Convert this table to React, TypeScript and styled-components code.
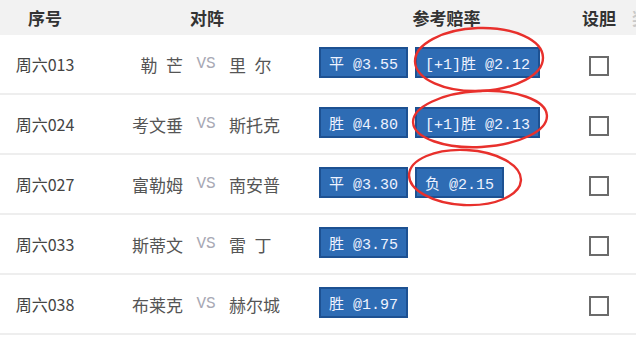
import React from 'react'
import styled, { createGlobalStyle } from 'styled-components';

type Match = {
  no: string;
  home: string;
  away: string;
  odds: string[];
};

const matches: Match[] = [
  { no: '周六013', home: '勒 芒', away: '里 尔', odds: ['平 @3.55', '[+1]胜 @2.12'] },
  { no: '周六024', home: '考文垂', away: '斯托克', odds: ['胜 @4.80', '[+1]胜 @2.13'] },
  { no: '周六027', home: '富勒姆', away: '南安普', odds: ['平 @3.30', '负 @2.15'] },
  { no: '周六033', home: '斯蒂文', away: '雷 丁', odds: ['胜 @3.75'] },
  { no: '周六038', home: '布莱克', away: '赫尔城', odds: ['胜 @1.97'] },
];

// annotation rings drawn over the odds column
const rings = [
  { cx: 479, cy: 59.5, rx: 64, ry: 31.5, rot: -2 },
  { cx: 480, cy: 119, rx: 67, ry: 28, rot: -3 },
  { cx: 465, cy: 177.5, rx: 56, ry: 27.5, rot: 3 },
];

// two-char names are padded with a wider gap
const padName = (name: string) => name.replace(' ', '\u2002');

const App: React.FC = () => {
  return (
    <PAGE>
      <GlobalStyle />
      <TABLE>
        <HEADROW>
          <HeadCell>序号</HeadCell>
          <HeadCell $padLeft={10}>对阵</HeadCell>
          <HeadCell $padLeft={13}>参考赔率</HeadCell>
          <HeadCell>设胆</HeadCell>
          <HeadCell $faded>奖金</HeadCell>
        </HEADROW>
        {matches.map((m, index) => (
          <ROW key={index}>
            <NoCell>{m.no}</NoCell>
            <TeamCell>
              <Team $side='home'>{padName(m.home)}</Team>
              <Versus>VS</Versus>
              <Team $side='away'>{padName(m.away)}</Team>
            </TeamCell>
            <OddsCell>
              {m.odds.map((o, i) => (
                <OddButton key={i}>{o}</OddButton>
              ))}
            </OddsCell>
            <CheckCell>
              <CheckBox />
            </CheckCell>
            <div />
          </ROW>
        ))}
      </TABLE>
      <Rings viewBox='0 0 636 353' width={636} height={353}>
        {rings.map((r, i) => (
          <ellipse
            key={i}
            cx={r.cx}
            cy={r.cy}
            rx={r.rx}
            ry={r.ry}
            transform={`rotate(${r.rot} ${r.cx} ${r.cy})`}
            fill='none'
            stroke='#e8302c'
            strokeWidth={2.4}
          />
        ))}
      </Rings>
    </PAGE>
  )
}

const GlobalStyle = createGlobalStyle`
  html, body {
    margin: 0;
    padding: 0;
    background: #fff;
    overflow: hidden;
  }
  body {
    font-family: "Noto Sans CJK SC", "Liberation Serif", serif;
  }
`;

const PAGE = styled.div`
  position: relative;
  width: 636px;
  height: 353px;
  overflow: hidden;
  background: #fff;
`;

const TABLE = styled.div`
  width: 680px;
  display: flex;
  flex-direction: column;
`;

const COLS = '90px 224px 252px 66px 1fr';

const HEADROW = styled.div`
  display: grid;
  grid-template-columns: ${COLS};
  height: 35px;
  background: #f2f2f2;
  align-items: center;
`;

const HeadCell = styled.div<{ $padLeft?: number; $faded?: boolean }>`
  text-align: center;
  padding-left: ${p => p.$padLeft || 0}px;
  font-size: 17px;
  font-weight: bold;
  color: ${p => (p.$faded ? '#c8c8c8' : '#333')};
  ${p => p.$faded && 'text-align: left; padding-left: 0;'}
  line-height: 35px;
  padding-bottom: 7px;
`;

const ROW = styled.div`
  display: grid;
  grid-template-columns: ${COLS};
  height: 58px;
  border-bottom: 2px solid #eeeeee;
  align-items: center;
`;

const NoCell = styled.div`
  text-align: center;
  font-size: 16px;
  color: #444;
`;

const TeamCell = styled.div`
  display: grid;
  grid-template-columns: 1fr 32px 1fr;
  column-gap: 7px;
  padding-left: 8px;
  align-items: center;
  font-size: 17px;
  color: #555;
`;

const Team = styled.span<{ $side: 'home' | 'away' }>`
  text-align: ${p => (p.$side === 'home' ? 'right' : 'left')};
  white-space: pre;
`;

const Versus = styled.span`
  text-align: center;
  font-family: "Liberation Mono", monospace;
  font-size: 16px;
  color: #a8a8b4;
`;

const OddsCell = styled.div`
  display: flex;
  gap: 7px;
  align-items: center;
  padding-left: 5px;
  padding-bottom: 3px;
`;

const OddButton = styled.div`
  box-sizing: border-box;
  height: 31px;
  display: flex;
  align-items: center;
  padding: 0 8px;
  background: #2e6cb4;
  border: 2px solid #1d5192;
  color: #eef3ff;
  font-family: "Liberation Mono", "Noto Sans CJK SC", monospace;
  font-size: 15px;
  white-space: pre;
`;

const CheckCell = styled.div`
  display: flex;
  justify-content: center;
  padding-top: 4px;
`;

const CheckBox = styled.div`
  box-sizing: border-box;
  width: 20px;
  height: 20px;
  border: 2px solid #6b6b6b;
  background: #fff;
`;

const Rings = styled.svg`
  position: absolute;
  left: 0;
  top: 0;
  pointer-events: none;
`;

export default App
